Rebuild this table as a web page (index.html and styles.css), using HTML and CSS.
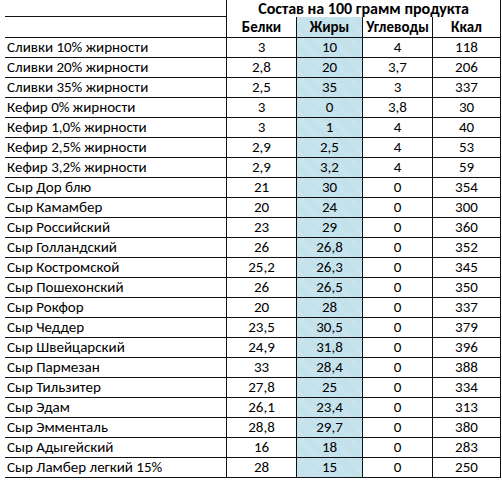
FILE: index.html
```html
<!DOCTYPE html>
<html lang="ru">
<head>
<meta charset="utf-8">
<title>Состав на 100 грамм продукта</title>
<link rel="stylesheet" href="styles.css">
</head>
<body>
<div class="sheet">
  <div class="cell corner"></div>
  <div class="cell title">Состав на 100 грамм продукта</div>

  <div class="cell head name"></div>
  <div class="cell head">Белки</div>
  <div class="cell head fat">Жиры</div>
  <div class="cell head">Углеводы</div>
  <div class="cell head">Ккал</div>

  <div class="cell name">Сливки 10% жирности</div><div class="cell">3</div><div class="cell fat">10</div><div class="cell">4</div><div class="cell">118</div>
  <div class="cell name">Сливки 20% жирности</div><div class="cell">2,8</div><div class="cell fat">20</div><div class="cell">3,7</div><div class="cell">206</div>
  <div class="cell name">Сливки 35% жирности</div><div class="cell">2,5</div><div class="cell fat">35</div><div class="cell">3</div><div class="cell">337</div>
  <div class="cell name">Кефир 0% жирности</div><div class="cell">3</div><div class="cell fat">0</div><div class="cell">3,8</div><div class="cell">30</div>
  <div class="cell name">Кефир 1,0% жирности</div><div class="cell">3</div><div class="cell fat">1</div><div class="cell">4</div><div class="cell">40</div>
  <div class="cell name">Кефир 2,5% жирности</div><div class="cell">2,9</div><div class="cell fat">2,5</div><div class="cell">4</div><div class="cell">53</div>
  <div class="cell name">Кефир 3,2% жирности</div><div class="cell">2,9</div><div class="cell fat">3,2</div><div class="cell">4</div><div class="cell">59</div>
  <div class="cell name">Сыр Дор блю</div><div class="cell">21</div><div class="cell fat">30</div><div class="cell">0</div><div class="cell">354</div>
  <div class="cell name">Сыр Камамбер</div><div class="cell">20</div><div class="cell fat">24</div><div class="cell">0</div><div class="cell">300</div>
  <div class="cell name">Сыр Российский</div><div class="cell">23</div><div class="cell fat">29</div><div class="cell">0</div><div class="cell">360</div>
  <div class="cell name">Сыр Голландский</div><div class="cell">26</div><div class="cell fat">26,8</div><div class="cell">0</div><div class="cell">352</div>
  <div class="cell name">Сыр Костромской</div><div class="cell">25,2</div><div class="cell fat">26,3</div><div class="cell">0</div><div class="cell">345</div>
  <div class="cell name">Сыр Пошехонский</div><div class="cell">26</div><div class="cell fat">26,5</div><div class="cell">0</div><div class="cell">350</div>
  <div class="cell name">Сыр Рокфор</div><div class="cell">20</div><div class="cell fat">28</div><div class="cell">0</div><div class="cell">337</div>
  <div class="cell name">Сыр Чеддер</div><div class="cell">23,5</div><div class="cell fat">30,5</div><div class="cell">0</div><div class="cell">379</div>
  <div class="cell name">Сыр Швейцарский</div><div class="cell">24,9</div><div class="cell fat">31,8</div><div class="cell">0</div><div class="cell">396</div>
  <div class="cell name">Сыр Пармезан</div><div class="cell">33</div><div class="cell fat">28,4</div><div class="cell">0</div><div class="cell">388</div>
  <div class="cell name">Сыр Тильзитер</div><div class="cell">27,8</div><div class="cell fat">25</div><div class="cell">0</div><div class="cell">334</div>
  <div class="cell name">Сыр Эдам</div><div class="cell">26,1</div><div class="cell fat">23,4</div><div class="cell">0</div><div class="cell">313</div>
  <div class="cell name">Сыр Эмменталь</div><div class="cell">28,8</div><div class="cell fat">29,7</div><div class="cell">0</div><div class="cell">380</div>
  <div class="cell name">Сыр Адыгейский</div><div class="cell">16</div><div class="cell fat">18</div><div class="cell">0</div><div class="cell">283</div>
  <div class="cell name">Сыр Ламбер легкий 15%</div><div class="cell">28</div><div class="cell fat">15</div><div class="cell">0</div><div class="cell">250</div>
</div>
</body>
</html>
```

FILE: styles.css
```css
html, body {
  margin: 0;
  padding: 0;
  background: #ffffff;
}

body {
  padding-left: 5px;
  font-family: Carlito, "Liberation Sans", sans-serif;
  font-size: 15px;
  color: #000000;
}

.sheet {
  display: grid;
  grid-template-columns: 222px 70px 66px 70px 68px;
  grid-template-rows: 17px 21px;
  grid-auto-rows: 20px;
  width: 496px;
}

.cell {
  box-sizing: border-box;
  border-right: 1px solid #111;
  border-bottom: 1px solid #111;
  display: flex;
  align-items: center;
  justify-content: center;
  line-height: 1;
  white-space: nowrap;
}

.cell.name {
  justify-content: flex-start;
  padding-left: 2px;
}

.corner {
  border-bottom: 1px solid #111;
}

.title {
  grid-column: 2 / 6;
  border-bottom: none;
  font-weight: bold;
  font-size: 16px;
}

.head {
  font-weight: bold;
}

.fat {
  background-color: #bfe0ea;
  background-image: repeating-linear-gradient(45deg, rgba(255,255,255,0.18) 0 1px, transparent 1px 2px);
}
```
